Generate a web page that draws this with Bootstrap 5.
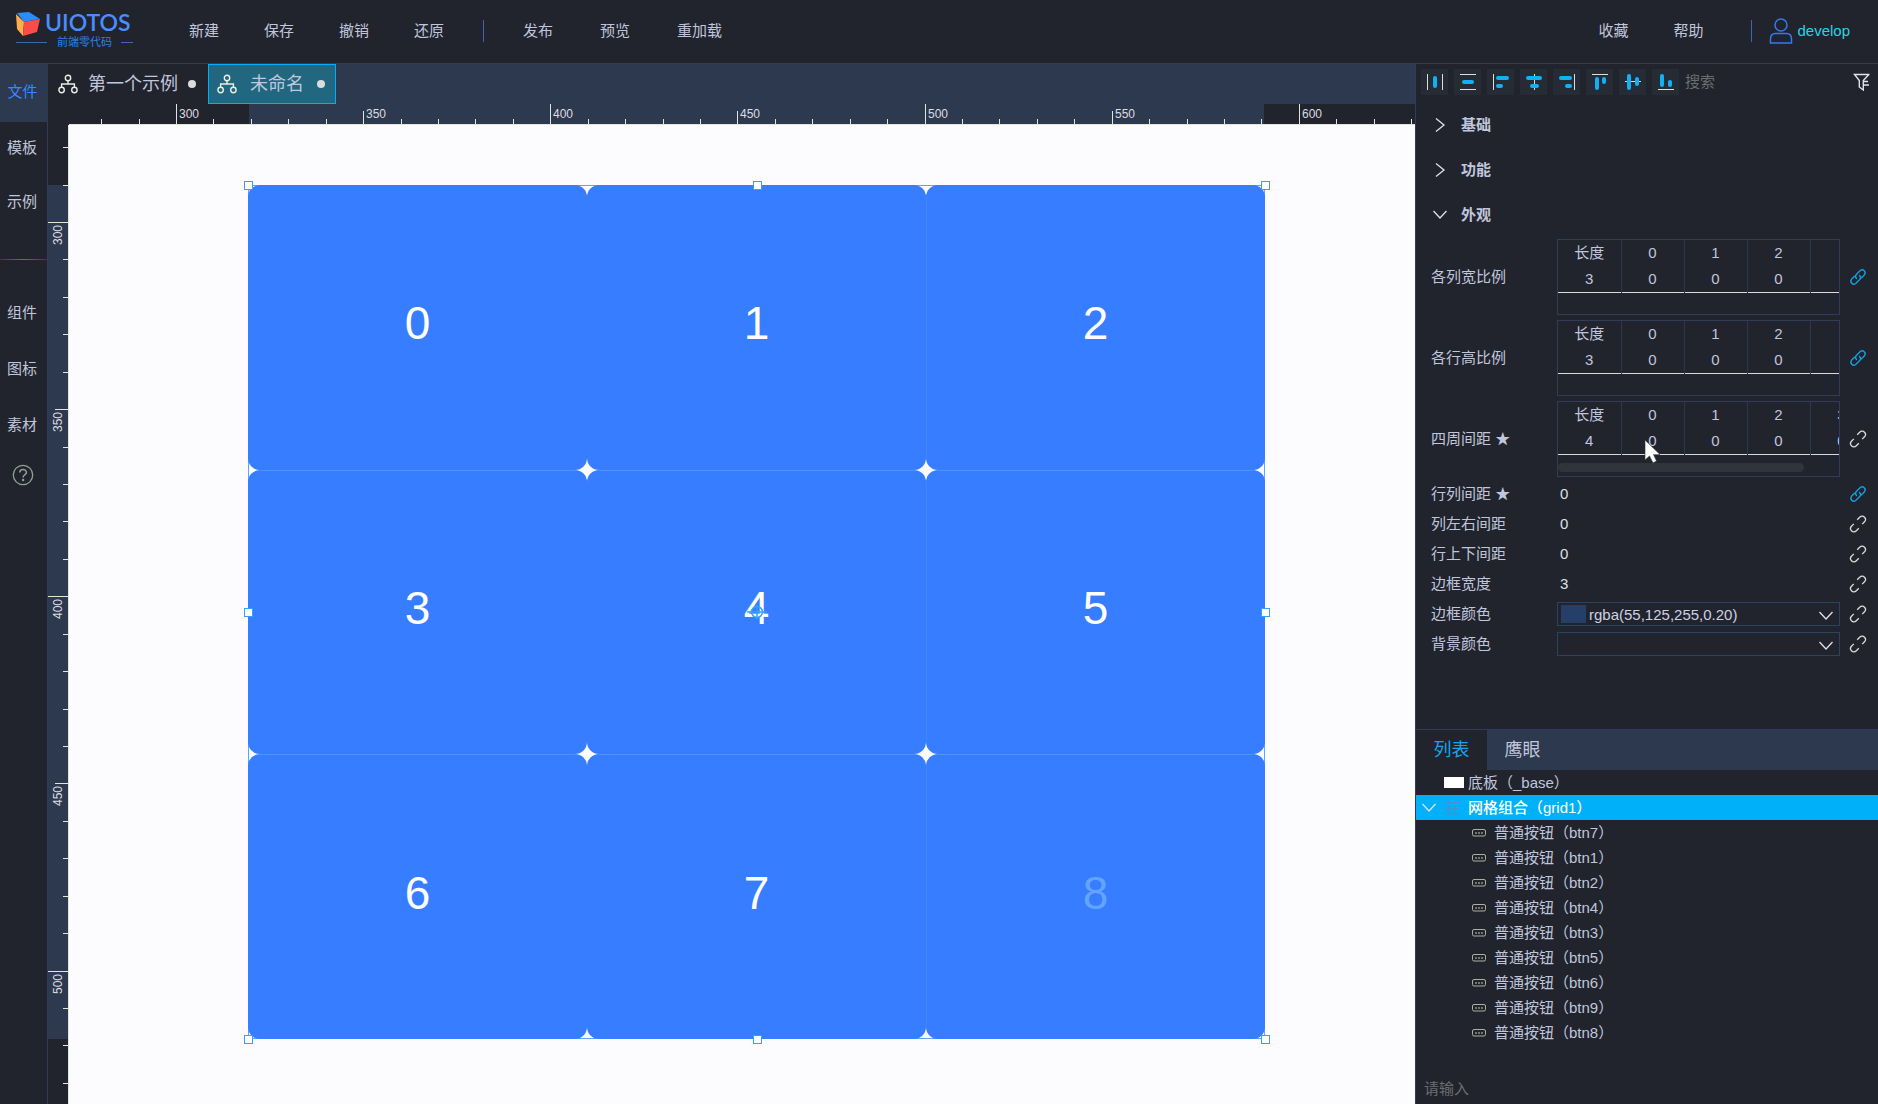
<!DOCTYPE html>
<html lang="zh-CN" data-bs-theme="dark">
<head>
<meta charset="utf-8">
<meta name="viewport" content="width=device-width, initial-scale=1">
<title>UIOTOS 前端零代码</title>
<link href="https://cdn.jsdelivr.net/npm/bootstrap@5.3.0/dist/css/bootstrap.min.css" rel="stylesheet">
<style>
:root{--dark:#21232d;--slate:#2c394e;--line:#323c58;--txt:#c0c6dc;--blue:#377dff;--cyan:#00b0f8}
body{background:var(--dark);color:var(--txt);font:15px/24px "Liberation Sans","Noto Sans CJK SC",sans-serif;overflow:hidden}
a{color:inherit;text-decoration:none}
button{background:none;border:0;padding:0;color:inherit}
svg{display:block;flex:none}
.topbar{height:64px;border-bottom:1px solid var(--line);padding-bottom:2px}
.brand{width:174px;padding:10px 0 0 16px;margin-right:15px}
.brand-name{font:600 23px/24px Lato,"Liberation Sans",sans-serif;color:#4a8dff;margin-left:5px}
.brand-sub{font-size:11px;line-height:12px;color:#2a80e0;margin:0 9px 0 10px}
.dash{height:1px;background:#3468b8}
.vbar{width:1px;height:22px;background:#3a66b4}
.menu-a{gap:45px}.menu-b{gap:47px}
.vbar-mid{margin:0 39px}
.user{color:#29d3e6;gap:4px;margin:0 28px 0 17px}
.side{width:48px;border-right:1px solid var(--line)}
.side a{height:54px;display:flex;align-items:center;justify-content:center;padding:0 3px 2px 0}
.side a.on{height:58px;background:var(--slate);color:#2f8cff;margin-right:-1px}
.side .low a{height:56px;padding-bottom:0}
.side .help{height:44px;width:45px}
.side-sep{height:1px;margin:29px 0 25px;background:linear-gradient(90deg,#2b3a66,#3f70d8,#2b3a66)}
.tabs{height:40px;background:var(--slate)}
.doc{font-size:18px;gap:10px;padding:0 12px 0 10px;background:var(--dark)}
.doc.on{background:#20677f;border:1px solid var(--cyan);padding:0 10px 0 8px;gap:13px}
.doc i{width:8px;height:8px;border-radius:50%;background:#dcdcdc}
.hruler{height:21px}.vruler{width:21px}
.ruler text{font-size:12px;fill:#dcdce2}
.board{background:#fcfcff;overflow:hidden}
.sheet{position:absolute;left:179px;top:60px;width:1017px;height:854px;outline:1px solid #58a6ff;outline-offset:-1px}
.cells{position:relative;z-index:0;display:grid;grid-template:repeat(3,1fr)/repeat(3,1fr);height:100%}
.cells button{background:var(--blue);border-radius:12px;color:#fff;font-size:46px;line-height:48px;padding-bottom:8px}
.cells button.dim{color:#62a4ff}
.seam{height:1px;margin:0 10px;background:#4f95ff;align-self:end;z-index:1}
.rule-h{position:absolute;height:1px;left:0;right:0;background:repeating-linear-gradient(90deg,transparent 0 12px,#4f95ff 12px calc(33.333% - 12px),transparent calc(33.333% - 12px) 33.333%)}
.rule-v{position:absolute;width:1px;top:0;bottom:0;background:repeating-linear-gradient(transparent 0 12px,#4385ff 12px calc(33.333% - 12px),transparent calc(33.333% - 12px) 33.333%)}
.p1{top:33.333%}.p2{top:66.666%}.q2{left:66.666%}
.knob{position:absolute;width:9px;height:9px;background:#fff;border:1px solid #35a0ff;margin:-4px 0 0 -4px}
.pivot{position:absolute;left:50%;top:50%;transform:translate(-50%,-50%)}
.props{width:463px;border-left:1px solid var(--line)}
.tools{height:36px;padding:0 7px 0 5px;gap:6px}
.tool{width:27px;height:26px;flex:none;background:#262c36;display:flex;align-items:center;justify-content:center}
.bare{background:none;border:0;color:#dde0ea;padding:0;outline:0;min-width:0}
.bare::placeholder{color:#6b6e70;opacity:1}
.group-list{height:139px;padding-top:2px}
.sect{height:45px;padding-left:17px;gap:14px;font-weight:700;width:100%}
.prop{min-height:24px;margin-bottom:6px;padding-left:15px}
.prop.grid-row{margin-bottom:5px}
.prop.grid-end{margin-bottom:7px}
.prop>label,.prop>.lab{width:126px;flex:none}
.field{width:283px;flex:none;position:relative}
.field .bare{width:100%;padding-left:3px;height:24px}
.arr{height:76px;border:1px solid var(--line);overflow:hidden}
.arr table{table-layout:fixed;width:378px;border-bottom:1px solid #d8dadf;text-align:center}
.arr td,.arr th{width:63px;height:26px;line-height:22px;padding:0;font-weight:400;border-right:1px solid #2b3650}
.arr .thumb{width:246px;height:9px;border-radius:5px;background:#31343b;margin-top:8px}
.prop .lk{margin-left:9px}
.pick{height:24px;border:1px solid #2a4460}
.pick select{appearance:none;width:100%;height:22px;background:none;border:0;color:#ccd2e4;padding:0 24px 0 31px;line-height:22px;outline:0}
.pick .sw{position:absolute;left:3px;top:2px;width:25px;height:18px;background:#253f68}
.pick svg{position:absolute;right:6px;top:8px}
.tree-tabs{height:41px;background:var(--slate);border-top:1px solid var(--line);font-size:18px}
.tree-tabs button{width:71px}
.tree-tabs .on{background:var(--dark);color:#10a8ec}
.tree-panel{height:375px}
.tree li{height:25px;display:flex;align-items:center;padding-left:56px;gap:8px}
.tree li.base{padding-left:28px;gap:4px}
.tree li.cur{padding-left:6px;background:var(--cyan);color:#fff;gap:9px}
.cmd{height:32px;padding-left:8px}
.cursor{position:absolute;left:87px;top:38px}
</style>
<script src="https://cdn.jsdelivr.net/npm/bootstrap@5.3.0/dist/js/bootstrap.bundle.min.js"></script>
</head>
<body class="vh-100 d-flex flex-column">
<svg width="0" height="0" class="position-absolute" aria-hidden="true">
 <symbol id="tree" viewBox="0 0 20 20"><g fill="none" stroke="#eceee4" stroke-width="1.4"><circle cx="10" cy="4" r="2.7"/><circle cx="3.6" cy="16" r="2.7"/><circle cx="16.4" cy="16" r="2.7"/><path d="M10 7v3M3.6 13v-3h12.8v3"/></g></symbol>
 <symbol id="right" viewBox="0 0 14 14"><path d="M3 .5L11 7l-8 6.500" fill="none" stroke="#dfe2ea" stroke-width="1.300"/></symbol>
 <symbol id="down" viewBox="0 0 14 9"><path d="M.5 1L7 8l6.500-7" fill="none" stroke="#dfe2ea" stroke-width="1.300"/></symbol>
 <symbol id="linked" viewBox="0 0 18 18"><g fill="none" stroke="#12a0e0" stroke-width="1.400" stroke-linecap="round"><path d="M7.500 10.500C6 9 6.300 7.500 7.500 6.300l3.800-3.800a3 3 0 0 1 4.200 4.200l-3 3"/><path d="M10.500 7.500c1.500 1.500 1.200 3 0 4.200l-3.800 3.800a3 3 0 0 1-4.200-4.200l3-3"/></g></symbol>
 <symbol id="broken" viewBox="0 0 18 18"><g fill="none" stroke="#dcdcd8" stroke-width="1.300"><path d="M8.200 4.800l2.500-2.500a3.200 3.200 0 0 1 4.800 0a3.200 3.200 0 0 1 0 4.500l-2.300 2.300M9.800 13.200l-2.500 2.500a3.200 3.200 0 0 1-4.800 0a3.200 3.200 0 0 1 0-4.500l2.300-2.300"/></g></symbol>
 <symbol id="btn" viewBox="0 0 14 8"><rect x=".5" y=".5" width="13" height="6.500" rx="1.500" fill="none" stroke="#aeb09c"/><path d="M3 4h8" stroke="#c4c6bc" stroke-width="1" stroke-dasharray="2 1"/></symbol>
</svg>

<header class="topbar d-flex align-items-center flex-shrink-0">
 <a href="#" class="brand h-100">
  <span class="d-flex">
   <svg width="24" height="26" viewBox="0 0 24 26"><path d="M1 3L13 2l11 7-16 3z" fill="#2a8cff"/><path d="M0 4l8 8-1 14-6-7z" fill="#ffae4a"/><path d="M8 12l16-3-3 13-14 4z" fill="#fb4c48"/></svg>
   <span class="brand-name">UIOTOS</span>
  </span>
  <span class="d-flex align-items-center">
   <span class="dash" style="width:31px"></span><span class="brand-sub">前端零代码</span><span class="dash" style="width:12px"></span>
  </span>
 </a>
 <nav class="d-flex menu-a"><a href="#">新建</a><a href="#">保存</a><a href="#">撤销</a><a href="#">还原</a></nav>
 <span class="vbar vbar-mid"></span>
 <nav class="d-flex menu-b me-auto"><a href="#">发布</a><a href="#">预览</a><a href="#">重加载</a></nav>
 <nav class="d-flex menu-a"><a href="#">收藏</a><a href="#">帮助</a></nav>
 <span class="vbar ms-5"></span>
 <a href="#" class="user d-flex align-items-center">
  <svg width="24" height="26" viewBox="0 0 24 26" fill="none" stroke="#3579f0" stroke-width="1.500"><circle cx="12" cy="7" r="6"/><path d="M1.500 25v-4c0-4 2-5.500 5-5.500h11c3 0 5 1.500 5 5.500v4z"/></svg>develop</a>
</header>

<main class="d-flex flex-grow-1 overflow-hidden">
 <aside class="side flex-shrink-0">
  <nav><a href="#" class="on">文件</a><a href="#">模板</a><a href="#">示例</a></nav>
  <div class="side-sep"></div>
  <nav class="low"><a href="#">组件</a><a href="#">图标</a><a href="#">素材</a></nav>
  <button class="help d-flex align-items-center justify-content-center" aria-label="帮助"><svg width="22" height="22" viewBox="0 0 22 22" fill="none" stroke="#8fa196" stroke-width="1.300"><circle cx="11" cy="11" r="9.700"/><path d="M7.800 8.500c0-4 6.600-4 6.600 0 0 2.200-3.300 2.300-3.300 5" stroke-width="1.500"/><circle cx="11.100" cy="16" r=".6"/></svg></button>
 </aside>

 <section class="d-flex flex-column flex-grow-1 overflow-hidden">
  <div class="tabs d-flex flex-shrink-0">
   <button class="doc d-flex align-items-center"><svg width="20" height="20"><use href="#tree"/></svg><span>第一个示例</span><i></i></button>
   <button class="doc on d-flex align-items-center"><svg width="20" height="20"><use href="#tree"/></svg><span>未命名</span><i></i></button>
  </div>
  <svg class="ruler hruler w-100" id="hr"></svg>
  <div class="d-flex flex-grow-1 overflow-hidden">
   <svg class="ruler vruler h-100" id="vr"></svg>
   <div class="board position-relative flex-grow-1">
    <div class="sheet">
     <div class="cells"><button>0</button><button>1</button><button>2</button><button>3</button><button>4</button><button>5</button><button>6</button><button>7</button><button class="dim">8</button></div>
     <div class="rule-h p1"></div><div class="rule-h p2"></div><div class="rule-v q2"></div>
     <span class="knob start-0 top-0"></span><span class="knob start-50 top-0"></span><span class="knob start-100 top-0"></span>
     <span class="knob start-0 top-50"></span><span class="knob start-100 top-50"></span>
     <span class="knob start-0 top-100"></span><span class="knob start-50 top-100"></span><span class="knob start-100 top-100"></span>
     <svg class="pivot" width="22" height="16" viewBox="0 0 22 16" fill="none" stroke="#35a0ff" stroke-width="1.500"><circle cx="11" cy="8" r="5.500"/><path d="M1 8h20M11 1v14"/></svg>
    </div>
   </div>
  </div>
 </section>

 <aside class="props d-flex flex-column flex-shrink-0">
  <div class="tools d-flex align-items-center">
   <button class="tool" aria-label="水平分布"><svg width="18" height="18" viewBox="0 0 18 18"><path d="M1.500 1v16M16.500 1v16" stroke="#ddd"/><rect x="7" y="3" width="4" height="12" rx="2" fill="#12b0f5"/></svg></button>
   <button class="tool" aria-label="垂直分布"><svg width="18" height="18" viewBox="0 0 18 18"><path d="M1 1.500h16M1 16.500h16" stroke="#ddd"/><rect x="3" y="7" width="12" height="4" rx="2" fill="#12b0f5"/></svg></button>
   <button class="tool" aria-label="左对齐"><svg width="18" height="18" viewBox="0 0 18 18"><path d="M1.500 1v16" stroke="#ddd"/><g fill="#12b0f5"><rect x="4" y="3" width="13" height="4" rx="2"/><rect x="4" y="11" width="7" height="4" rx="2"/></g></svg></button>
   <button class="tool" aria-label="水平居中"><svg width="18" height="18" viewBox="0 0 18 18"><path d="M9.500 1v16" stroke="#ddd"/><g fill="#12b0f5"><rect x="1" y="3" width="16" height="4" rx="2"/><rect x="5" y="11" width="9" height="4" rx="2"/></g></svg></button>
   <button class="tool" aria-label="右对齐"><svg width="18" height="18" viewBox="0 0 18 18"><path d="M16.500 1v16" stroke="#ddd"/><g fill="#12b0f5"><rect x="1" y="3" width="13" height="4" rx="2"/><rect x="7" y="11" width="7" height="4" rx="2"/></g></svg></button>
   <button class="tool" aria-label="顶对齐"><svg width="18" height="18" viewBox="0 0 18 18"><path d="M1 1.500h16" stroke="#ddd"/><g fill="#12b0f5"><rect x="4" y="4" width="4" height="13" rx="2"/><rect x="11" y="4" width="4" height="7" rx="2"/></g></svg></button>
   <button class="tool" aria-label="垂直居中"><svg width="18" height="18" viewBox="0 0 18 18"><path d="M1 8.500h16" stroke="#ddd"/><g fill="#12b0f5"><rect x="3" y="1" width="4" height="16" rx="2"/><rect x="11" y="4" width="4" height="9" rx="2"/></g></svg></button>
   <button class="tool" aria-label="底对齐"><svg width="18" height="18" viewBox="0 0 18 18"><path d="M1 16.500h16" stroke="#ddd"/><g fill="#12b0f5"><rect x="3" y="1" width="4" height="13" rx="2"/><rect x="11" y="7" width="4" height="7" rx="2"/></g></svg></button>
   <input class="bare flex-grow-1" placeholder="搜索" aria-label="搜索">
   <button aria-label="筛选"><svg width="18" height="18" viewBox="0 0 18 18" fill="none" stroke="#dfe2ea" stroke-width="1.400"><path d="M16.500 1.500H1.500l4.800 6v6.500l4 3V7.500l5.500-6M11 8.500h4M11 12h5"/></svg></button>
  </div>
  <div class="d-flex flex-column">
   <div class="group-list">
    <button class="sect d-flex align-items-center"><svg width="14" height="14"><use href="#right"/></svg>基础</button>
    <button class="sect d-flex align-items-center"><svg width="14" height="14"><use href="#right"/></svg>功能</button>
    <button class="sect d-flex align-items-center"><svg width="14" height="9"><use href="#down"/></svg>外观</button>
   </div>
   <div class="prop grid-row d-flex align-items-center"><span class="lab">各列宽比例</span><div class="field arr"><table><tr><th>长度</th><th>0</th><th>1</th><th>2</th><th></th><th></th></tr><tr><td>3</td><td>0</td><td>0</td><td>0</td><td></td><td></td></tr></table></div><svg class="lk" width="18" height="18"><use href="#linked"/></svg></div>
   <div class="prop grid-row d-flex align-items-center"><span class="lab">各行高比例</span><div class="field arr"><table><tr><th>长度</th><th>0</th><th>1</th><th>2</th><th></th><th></th></tr><tr><td>3</td><td>0</td><td>0</td><td>0</td><td></td><td></td></tr></table></div><svg class="lk" width="18" height="18"><use href="#linked"/></svg></div>
   <div class="prop grid-row d-flex align-items-center"><span class="lab">四周间距 ★</span><div class="field"><div class="arr"><table><tr><th>长度</th><th>0</th><th>1</th><th>2</th><th>3</th><th></th></tr><tr><td>4</td><td>0</td><td>0</td><td>0</td><td>0</td><td></td></tr></table><div class="thumb"></div></div>
     <svg class="cursor" width="17" height="25" viewBox="0 0 17 25"><path d="M1 1v20l4.500-4 3.500 7 3.500-2-3-6.500H16z" fill="#fff" stroke="#333" stroke-width=".6"/></svg></div><svg class="lk" width="18" height="18"><use href="#broken"/></svg></div>
   <div class="prop d-flex align-items-center"><label for="f1">行列间距 ★</label><div class="field"><input id="f1" class="bare" value="0"></div><svg class="lk" width="18" height="18"><use href="#linked"/></svg></div>
   <div class="prop d-flex align-items-center"><label for="f2">列左右间距</label><div class="field"><input id="f2" class="bare" value="0"></div><svg class="lk" width="18" height="18"><use href="#broken"/></svg></div>
   <div class="prop d-flex align-items-center"><label for="f3">行上下间距</label><div class="field"><input id="f3" class="bare" value="0"></div><svg class="lk" width="18" height="18"><use href="#broken"/></svg></div>
   <div class="prop d-flex align-items-center"><label for="f4">边框宽度</label><div class="field"><input id="f4" class="bare" value="3"></div><svg class="lk" width="18" height="18"><use href="#broken"/></svg></div>
   <div class="prop d-flex align-items-center"><label for="f5">边框颜色</label><div class="field pick"><span class="sw"></span><select id="f5"><option>rgba(55,125,255,0.20)</option></select><svg width="14" height="9"><use href="#down"/></svg></div><svg class="lk" width="18" height="18"><use href="#broken"/></svg></div>
   <div class="prop d-flex align-items-center"><label for="f6">背景颜色</label><div class="field pick"><select id="f6"><option></option></select><svg width="14" height="9"><use href="#down"/></svg></div><svg class="lk" width="18" height="18"><use href="#broken"/></svg></div>
  </div>
  <div class="tree-panel mt-auto d-flex flex-column">
   <div class="tree-tabs d-flex"><button class="on">列表</button><button>鹰眼</button></div>
   <ul class="tree list-unstyled mb-auto">
    <li class="base"><svg width="20" height="11"><rect width="20" height="11" fill="#fff"/></svg>底板（_base）</li>
    <li class="cur"><svg width="14" height="9"><use href="#down"/></svg><svg width="14" height="14" viewBox="0 0 14 14" fill="none" stroke="#5f86b8" stroke-dasharray="2 1"><path d="M0 1.500h14M0 7.500h14M0 13h14M4.500 1v13M9.500 1v13"/></svg><span class="fw-medium">网格组合（grid1）</span></li>
    <li><svg width="14" height="8"><use href="#btn"/></svg>普通按钮（btn7）</li>
    <li><svg width="14" height="8"><use href="#btn"/></svg>普通按钮（btn1）</li>
    <li><svg width="14" height="8"><use href="#btn"/></svg>普通按钮（btn2）</li>
    <li><svg width="14" height="8"><use href="#btn"/></svg>普通按钮（btn4）</li>
    <li><svg width="14" height="8"><use href="#btn"/></svg>普通按钮（btn3）</li>
    <li><svg width="14" height="8"><use href="#btn"/></svg>普通按钮（btn5）</li>
    <li><svg width="14" height="8"><use href="#btn"/></svg>普通按钮（btn6）</li>
    <li><svg width="14" height="8"><use href="#btn"/></svg>普通按钮（btn9）</li>
    <li><svg width="14" height="8"><use href="#btn"/></svg>普通按钮（btn8）</li>
   </ul>
   <input class="bare cmd" placeholder="请输入" aria-label="请输入">
  </div>
 </aside>
</main>
<script>
// Rulers: one tick per 10 units, half-length at 50, full-length at 100.
const STEP = 37.43;
function ruler(id, origin, from, to, vertical) {
  const el = document.getElementById(id), len = vertical ? el.clientHeight : el.clientWidth;
  const box = (a, n, b, m) => vertical ? `x="${b}" y="${a}" width="${m}" height="${n}"` : `x="${a}" y="${b}" width="${n}" height="${m}"`;
  let s = `<rect ${box(from, to - from, 0, 20)} fill="#2c394e"/><rect ${box(vertical ? 0 : 21, len, 20, 1)} fill="#e4e4d8"/>`;
  for (let i = -3; ; i++) {
    const p = Math.round(origin + i * STEP);
    if (p > len) break;
    if (p < 21) continue;
    const v = 300 + i * 10, n = v % 100 === 0 ? 20 : v % 50 === 0 ? 13 : 5;
    s += `<rect ${box(p - 1, 1, 20 - n, n)} fill="#e4e4d8"/>`;
    if (v % 50 === 0) s += vertical ? `<text transform="translate(14 ${p + 22}) rotate(-90)">${v}</text>` : `<text x="${p + 2}" y="14">${v}</text>`;
  }
  el.innerHTML = s;
}
function draw() { ruler('hr', 129, 201, 1216, false); ruler('vr', 98, 60, 914, true); }
draw();
addEventListener('resize', draw);
</script>
</body>
</html>
